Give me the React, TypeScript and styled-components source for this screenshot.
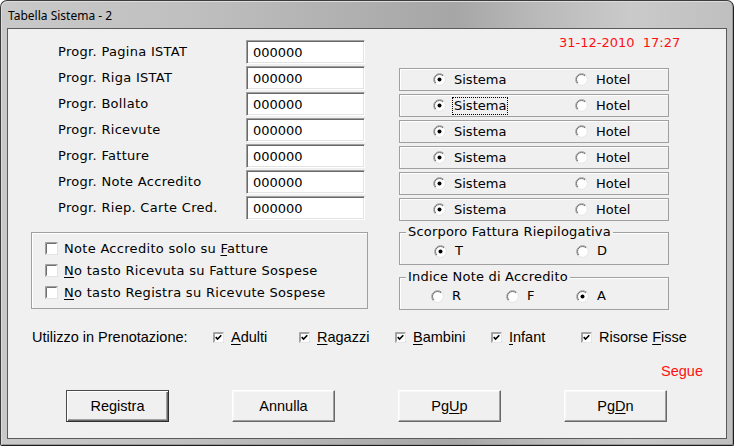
import React from 'react';
import styled, { createGlobalStyle, css } from 'styled-components';

const GlobalStyle = createGlobalStyle`
  html, body {
    margin: 0;
    padding: 0;
    background: #ffffff;
  }
  body {
    width: 734px;
    height: 446px;
    overflow: hidden;
  }
`;

const UI_FONT = `'DejaVu Sans', 'Liberation Sans', sans-serif`;
const NARROW_FONT = `'Liberation Sans', Arial, sans-serif`;

const fields = [
  'Progr. Pagina ISTAT',
  'Progr. Riga ISTAT',
  'Progr. Bollato',
  'Progr. Ricevute',
  'Progr. Fatture',
  'Progr. Note Accredito',
  'Progr. Riep. Carte Cred.',
];

const RadioMark = ({ checked }: { checked?: boolean }) => (
  <svg width="13" height="13" viewBox="0 0 13 13" aria-hidden="true">
    <circle cx="6.5" cy="6.5" r="6" fill="#ffffff" />
    <path d="M2.26 10.74 A6 6 0 0 1 10.74 2.26" fill="none" stroke="#a0a0a0" />
    <path d="M10.74 2.26 A6 6 0 0 1 2.26 10.74" fill="none" stroke="#e3e3e3" />
    <path d="M2.96 10.04 A5 5 0 0 1 10.04 2.96" fill="none" stroke="#6f6f6f" />
    {checked && <circle cx="6.5" cy="6.5" r="2" fill="#000000" />}
  </svg>
);

const CheckMark = ({ checked, size = 13 }: { checked?: boolean; size?: number }) => (
  <svg width={size} height={size} viewBox="0 0 13 13" aria-hidden="true">
    <rect x="0.5" y="0.5" width="12" height="12" fill="#ffffff" stroke="#e3e3e3" />
    <path d="M0.5 12.5 V0.5 H12.5" fill="none" stroke="#a0a0a0" />
    <path d="M1.5 11.5 V1.5 H11.5" fill="none" stroke="#707070" />
    {checked && (
      <path d="M3.2 6 L5.4 8.3 L9.8 3.8" fill="none" stroke="#000000" strokeWidth="1.9" />
    )}
  </svg>
);

export default function App() {
  return (
    <>
      <GlobalStyle />
      <Window>
        <TitleBar>Tabella Sistema - 2</TitleBar>
        <Client>
          <TopSection>
            <LeftCol>
              <FieldList>
                {fields.map((f) => (
                  <FieldRow key={f}>
                    <FieldLabel>{f}</FieldLabel>
                    <TextBox readOnly value="000000" />
                  </FieldRow>
                ))}
              </FieldList>
              <CheckGroup>
                <CheckRow>
                  <CheckMark />
                  <span>
                    Note Accredito solo su <Key>F</Key>atture
                  </span>
                </CheckRow>
                <CheckRow>
                  <CheckMark />
                  <span>
                    <Key>N</Key>o tasto Ricevuta su Fatture Sospese
                  </span>
                </CheckRow>
                <CheckRow>
                  <CheckMark />
                  <span>
                    <Key>N</Key>o tasto Registra su Ricevute Sospese
                  </span>
                </CheckRow>
              </CheckGroup>
            </LeftCol>

            <RightCol>
              <DateRow>31-12-2010&nbsp;&nbsp;17:27</DateRow>
              <ChoiceList>
                {[0, 1, 2, 3, 4, 5].map((i) => (
                  <ChoiceBox key={i} $pad={33}>
                    <Option $w={142}>
                      <RadioMark checked />
                      {i === 1 ? <Focus>Sistema</Focus> : <span>Sistema</span>}
                    </Option>
                    <Option>
                      <RadioMark />
                      <span>Hotel</span>
                    </Option>
                  </ChoiceBox>
                ))}
              </ChoiceList>
              <GroupBox>
                <Legend>Scorporo Fattura Riepilogativa</Legend>
                <GroupRow $pad={35}>
                  <Option $w={142}>
                    <RadioMark checked />
                    <span>T</span>
                  </Option>
                  <Option>
                    <RadioMark />
                    <span>D</span>
                  </Option>
                </GroupRow>
              </GroupBox>
              <GroupBox $gap={12}>
                <Legend>Indice Note di Accredito</Legend>
                <GroupRow $pad={32}>
                  <Option $w={75}>
                    <RadioMark />
                    <span>R</span>
                  </Option>
                  <Option $w={70}>
                    <RadioMark />
                    <span>F</span>
                  </Option>
                  <Option>
                    <RadioMark checked />
                    <span>A</span>
                  </Option>
                </GroupRow>
              </GroupBox>
            </RightCol>
          </TopSection>

          <UsageRow>
            <UsageLabel>Utilizzo in Prenotazione:</UsageLabel>
            <UsageItem $w={86}>
              <CheckMark checked size={11} />
              <span>
                <Key>A</Key>dulti
              </span>
            </UsageItem>
            <UsageItem $w={96}>
              <CheckMark checked size={11} />
              <span>
                <Key>R</Key>agazzi
              </span>
            </UsageItem>
            <UsageItem $w={96}>
              <CheckMark checked size={11} />
              <span>
                <Key>B</Key>ambini
              </span>
            </UsageItem>
            <UsageItem $w={90}>
              <CheckMark checked size={11} />
              <span>
                <Key>I</Key>nfant
              </span>
            </UsageItem>
            <UsageItem>
              <CheckMark checked size={11} />
              <span>
                Risorse <Key>F</Key>isse
              </span>
            </UsageItem>
          </UsageRow>

          <NoteRow>Segue</NoteRow>

          <ButtonBar>
            <Button $default>Registra</Button>
            <Button>Annulla</Button>
            <Button>
              Pg<Key>U</Key>p
            </Button>
            <Button>
              Pg<Key>D</Key>n
            </Button>
          </ButtonBar>
        </Client>
      </Window>
    </>
  );
}

const Window = styled.div`
  box-sizing: border-box;
  width: 734px;
  height: 446px;
  display: flex;
  flex-direction: column;
  padding: 0 6px 6px;
  border: 1px solid #3c3c3c;
  border-right-color: #1e1e1e;
  border-bottom-color: #1e1e1e;
  border-radius: 7px 7px 2px 2px;
  background: linear-gradient(
    90deg,
    #c9c9c9 0%,
    #c0c0c0 25%,
    #a6a6a6 62%,
    #b9b9b9 73%,
    #cacaca 86%,
    #bfbfbf 100%
  );
  box-shadow: inset 1px 1px 0 #dcdcdc, inset -1px -1px 0 #9a9a9a;
  overflow: hidden;
`;

const TitleBar = styled.div`
  height: 27px;
  display: flex;
  align-items: center;
  padding-left: 1px;
  padding-top: 1px;
  box-sizing: border-box;
  font-family: 'Noto Sans', 'Open Sans', sans-serif;
  font-size: 12px;
  color: #000000;
`;

const Client = styled.div`
  flex: 1;
  display: flex;
  flex-direction: column;
  background: #f0f0f0;
  border: 1px solid #5a5a5a;
  font-family: ${UI_FONT};
  font-size: 13px;
  color: #000000;
`;

const TopSection = styled.div`
  display: flex;
  gap: 31px;
  padding-left: 23px;
`;

const LeftCol = styled.div`
  width: 337px;
  display: flex;
  flex-direction: column;
`;

const FieldList = styled.div`
  display: flex;
  flex-direction: column;
  gap: 2px;
  padding-top: 11px;
`;

const FieldRow = styled.div`
  display: grid;
  grid-template-columns: 188px 119px;
  align-items: center;
  height: 24px;
  padding-left: 27px;
`;

const FieldLabel = styled.span`
  white-space: nowrap;
  line-height: 16px;
  letter-spacing: 0.3px;
`;

const TextBox = styled.input`
  box-sizing: border-box;
  width: 119px;
  height: 24px;
  margin: 0;
  padding: 0 0 0 6px;
  background: #ffffff;
  border: 1px solid;
  border-color: #a0a0a0 #ffffff #ffffff #a0a0a0;
  box-shadow: inset 1px 1px 0 #696969, inset -1px -1px 0 #e3e3e3;
  font-family: ${UI_FONT};
  font-size: 13px;
  color: #000000;
  outline: none;
`;

const CheckGroup = styled.div`
  box-sizing: border-box;
  height: 77px;
  margin-top: 12px;
  padding: 4px 0 0 13px;
  border: 1px solid #a0a0a0;
  box-shadow: inset 1px 1px 0 #ffffff;
`;

const CheckRow = styled.div`
  height: 22px;
  display: flex;
  align-items: center;
  gap: 6px;
  white-space: nowrap;
  letter-spacing: 0.3px;
`;

const RightCol = styled.div`
  width: 270px;
  display: flex;
  flex-direction: column;
`;

const DateRow = styled.div`
  box-sizing: border-box;
  height: 39px;
  padding: 6px 0 0 160px;
  line-height: 16px;
  color: #ff1010;
  white-space: nowrap;
`;

const ChoiceList = styled.div`
  display: flex;
  flex-direction: column;
  gap: 3px;
`;

const ChoiceBox = styled.div<{ $pad: number }>`
  box-sizing: border-box;
  height: 23px;
  display: flex;
  align-items: center;
  padding-left: ${(p) => p.$pad}px;
  border: 1px solid #a0a0a0;
  box-shadow: inset 1px 1px 0 #ffffff;
`;

const Option = styled.label<{ $w?: number }>`
  display: flex;
  align-items: center;
  gap: 8px;
  width: ${(p) => (p.$w ? `${p.$w}px` : 'auto')};
  line-height: 16px;
  white-space: nowrap;
`;

const Focus = styled.span`
  outline: 1px dotted #000000;
  outline-offset: 0;
  padding: 0 1px;
  margin-left: -1px;
`;

const GroupBox = styled.div<{ $gap?: number }>`
  position: relative;
  box-sizing: border-box;
  height: 33px;
  margin-top: ${(p) => p.$gap ?? 11}px;
  border: 1px solid #a0a0a0;
  box-shadow: inset 1px 1px 0 #ffffff;
`;

const Legend = styled.span`
  position: absolute;
  top: -9px;
  left: 6px;
  padding: 0 2px;
  line-height: 16px;
  letter-spacing: 0.2px;
  background: #f0f0f0;
  white-space: nowrap;
`;

const GroupRow = styled.div<{ $pad: number }>`
  display: flex;
  align-items: center;
  height: 16px;
  padding: 10px 0 0 ${(p) => p.$pad - 1}px;
`;

const UsageRow = styled.div`
  display: flex;
  align-items: center;
  height: 16px;
  margin-top: 19px;
  padding-left: 24px;
  font-family: ${NARROW_FONT};
  font-size: 14.5px;
  white-space: nowrap;
`;

const UsageLabel = styled.span`
  width: 181px;
`;

const UsageItem = styled.label<{ $w?: number }>`
  display: flex;
  align-items: center;
  gap: 7px;
  width: ${(p) => (p.$w ? `${p.$w}px` : 'auto')};
`;

const NoteRow = styled.div`
  height: 16px;
  margin-top: 18px;
  padding-right: 23px;
  text-align: right;
  line-height: 16px;
  font-family: ${NARROW_FONT};
  font-size: 14.5px;
  color: #ff1010;
`;

const ButtonBar = styled.div`
  display: flex;
  gap: 63px;
  margin-top: 11px;
  padding-left: 58px;
`;

const Button = styled.button<{ $default?: boolean }>`
  box-sizing: border-box;
  width: 103px;
  height: 32px;
  margin: 0;
  padding: 0;
  background: #f0f0f0;
  border: 1px solid;
  border-color: #ffffff #696969 #696969 #ffffff;
  box-shadow: inset -1px -1px 0 #a0a0a0, inset 1px 1px 0 #f8f8f8;
  font-family: ${NARROW_FONT};
  font-size: 14.5px;
  color: #000000;
  ${(p) =>
    p.$default &&
    css`
      border-color: #4a4a4a #2e2e2e #2e2e2e #4a4a4a;
      box-shadow: inset 1px 1px 0 #ffffff, inset -1px -1px 0 #696969,
        inset -2px -2px 0 #a0a0a0;
    `}
`;

const Key = styled.span`
  text-decoration: underline;
  text-underline-offset: 2px;
`;
